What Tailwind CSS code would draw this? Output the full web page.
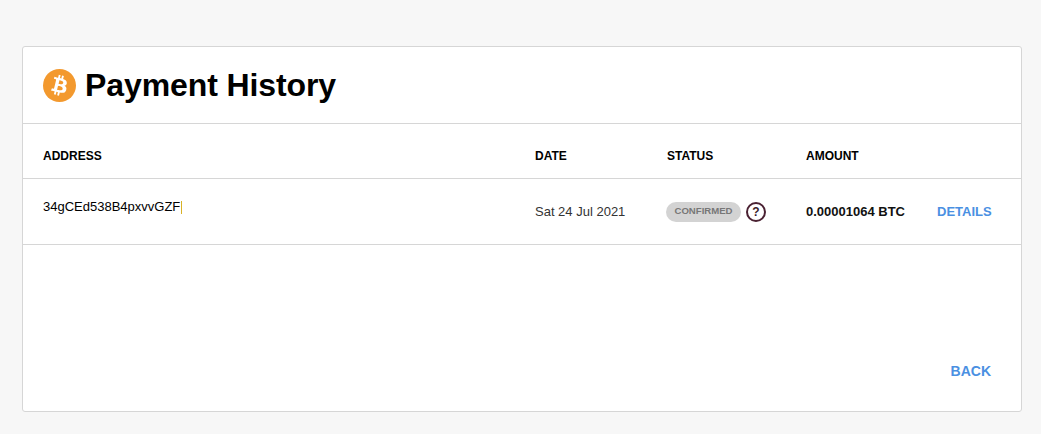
<!DOCTYPE html>
<html lang="en">

<head>
  <meta charset="UTF-8">
  <meta name="viewport" content="width=device-width, initial-scale=1.0">
  <title>Payment History</title>
  <script src="https://cdn.jsdelivr.net/npm/@tailwindcss/browser@4"></script>
</head>

<body class="bg-[#f7f7f7] h-[434px] overflow-hidden font-['Liberation_Sans',Arial,sans-serif] pt-[46px] pl-[22px] pr-[19px]">

  <div class="bg-white border border-[#d6d6d6] rounded-[3px] h-[366px] flex flex-col">
    <!-- Title -->
    <div class="h-[77px] flex items-center pl-5 gap-[9px] border-b border-[#d6d6d6]">
      <svg width="33" height="33" viewBox="0 0 64 64">
        <circle cx="32" cy="32" r="32" fill="#f3992e" />
        <path fill="#fff" d="M46.1 27.4c.6-4.3-2.6-6.6-7.1-8.1l1.5-5.8-3.5-.9-1.4 5.7c-.9-.2-1.9-.5-2.8-.7l1.4-5.7-3.5-.9-1.5 5.8c-.8-.2-1.5-.3-2.2-.5l-4.9-1.2-.9 3.8s2.6.6 2.6.6c1.4.4 1.7 1.3 1.6 2l-1.6 6.6c.1 0 .2.1.4.1l-.4-.1-2.3 9.2c-.2.4-.6 1.1-1.6.8 0 .1-2.6-.6-2.6-.6l-1.8 4 4.6 1.2c.9.2 1.7.4 2.5.6l-1.5 5.9 3.5.9 1.5-5.8c1 .3 1.9.5 2.8.7l-1.4 5.8 3.5.9 1.5-5.9c6 1.1 10.5.7 12.4-4.8 1.5-4.4-.1-6.9-3.2-8.5 2.3-.5 4-2 4.5-5.1zm-8 11.2c-1.1 4.4-8.4 2-10.8 1.4l1.9-7.7c2.4.6 10 1.8 8.9 6.3zm1.1-11.3c-1 4-7.1 2-9 1.5l1.7-7c2 .5 8.3 1.4 7.3 5.5z" />
      </svg>
      <h1 class="text-[32px] leading-none font-bold text-black tracking-[-0.1px]">Payment History</h1>
    </div>

    <!-- Table header -->
    <div class="h-[55px] pt-[9px] flex items-center pl-5 text-xs font-bold text-black border-b border-[#d6d6d6]">
      <div class="w-[492px]">ADDRESS</div>
      <div class="w-[132px]">DATE</div>
      <div class="w-[139px]">STATUS</div>
      <div>AMOUNT</div>
    </div>

    <!-- Row -->
    <div class="h-[66px] flex items-center pl-5 border-b border-[#d6d6d6] text-[13px] text-[#222]">
      <div class="w-[492px] mb-[10px] flex items-center text-black">
        <span>34gCEd538B4pxvvGZF</span><span class="w-px h-[13px] bg-[#d9b227] ml-px mt-[2px]"></span>
      </div>
      <div class="w-[131px] text-[#333]">Sat 24 Jul 2021</div>
      <div class="w-[140px] flex items-center gap-[5px]">
        <span class="w-[75px] h-5 rounded-full bg-[#d3d3d3] text-[#777] text-[9.6px] font-bold flex items-center justify-center">CONFIRMED</span>
        <span class="w-5 h-5 rounded-full border-2 border-[#4a2132] text-[#3a1a28] text-xs font-bold flex items-center justify-center">?</span>
      </div>
      <div class="w-[131px] font-bold text-[#111]">0.00001064 BTC</div>
      <a class="text-[#4a90e2] text-[13px] font-bold">DETAILS</a>
    </div>

    <!-- Footer -->
    <div class="flex-1 flex items-end justify-end pr-[30px] pb-[30px]">
      <a class="text-[#4a90e2] text-sm font-bold">BACK</a>
    </div>
  </div>

</body>

</html>
